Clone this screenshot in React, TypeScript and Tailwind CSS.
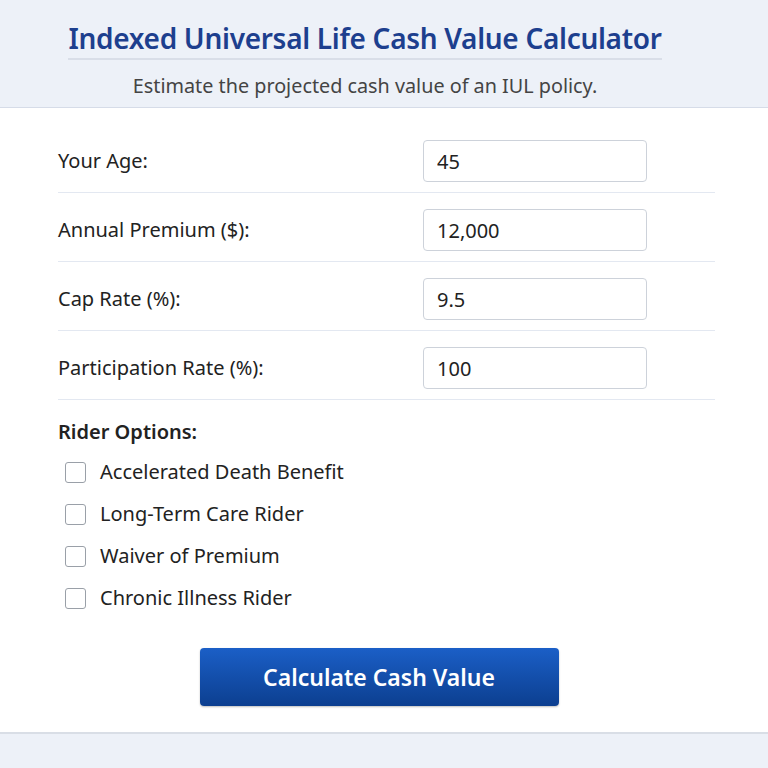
import React, { useState } from 'react'

const fields = [
  { id: 'age', label: 'Your Age:', value: '45' },
  { id: 'premium', label: 'Annual Premium ($):', value: '12,000' },
  { id: 'cap', label: 'Cap Rate (%):', value: '9.5' },
  { id: 'participation', label: 'Participation Rate (%):', value: '100' },
]

const riders = [
  'Accelerated Death Benefit',
  'Long-Term Care Rider',
  'Waiver of Premium',
  'Chronic Illness Rider',
]

export default function App() {
  const [values, setValues] = useState<Record<string, string>>(
    Object.fromEntries(fields.map(f => [f.id, f.value]))
  )
  const [checked, setChecked] = useState<Record<string, boolean>>({})

  return (
    <div className="min-h-[768px] bg-[#edf1f8] font-['Noto_Sans',sans-serif] text-[#222]">
      {/* Header */}
      <header className="flex flex-col items-center border-b border-[#d6dce8] pb-[8px] pr-[38px] pt-[20px]">
        <h1 className="border-b-2 border-[#d9dee8] pb-[2px] text-[28px] font-semibold leading-[36px] tracking-[-0.3px] text-[#1d3f8e]">
          Indexed Universal Life Cash Value Calculator
        </h1>
        <p className="mt-[13px] text-[19.8px] leading-[26px] text-[#444]">
          Estimate the projected cash value of an IUL policy.
        </p>
      </header>

      {/* Form card */}
      <main className="border-b-2 border-[#d9dee6] bg-white px-[58px] pb-[26px] pt-[16px]">
        <div className="w-[657px]">
          {fields.map(f => (
            <div
              key={f.id}
              className="flex items-center justify-between border-b border-[#e3e8f1] pb-[10px] pt-[16px]"
            >
              <label htmlFor={f.id} className="text-[20px]">
                {f.label}
              </label>
              <input
                id={f.id}
                type="text"
                value={values[f.id]}
                onChange={e => setValues({ ...values, [f.id]: e.target.value })}
                className="mr-[68px] h-[42px] w-[224px] rounded-[4px] border border-[#cdd2da] px-[13px] text-[20px] outline-none"
              />
            </div>
          ))}
        </div>

        <div className="mt-[18px] text-[20px] font-semibold leading-[28px]">Rider Options:</div>
        <div className="mt-[13px] flex flex-col gap-[16px] pl-[7px]">
          {riders.map(r => (
            <label key={r} className="flex items-center gap-[14px] text-[20px] leading-[26px]">
              <input
                type="checkbox"
                checked={!!checked[r]}
                onChange={() => setChecked({ ...checked, [r]: !checked[r] })}
                className="h-[21px] w-[21px] appearance-none rounded-[3px] border border-[#9aa0a8] bg-white checked:bg-[#1a56b8]"
              />
              {r}
            </label>
          ))}
        </div>

        <div className="mt-[37px] flex justify-center pr-[10px]">
          <button className="h-[58px] w-[359px] rounded-[4px] bg-gradient-to-b from-[#1b5fc7] to-[#0c3f90] text-[23px] font-semibold text-white shadow-[0_1px_2px_rgba(0,0,0,0.25)]">
            Calculate Cash Value
          </button>
        </div>
      </main>
    </div>
  )
}
